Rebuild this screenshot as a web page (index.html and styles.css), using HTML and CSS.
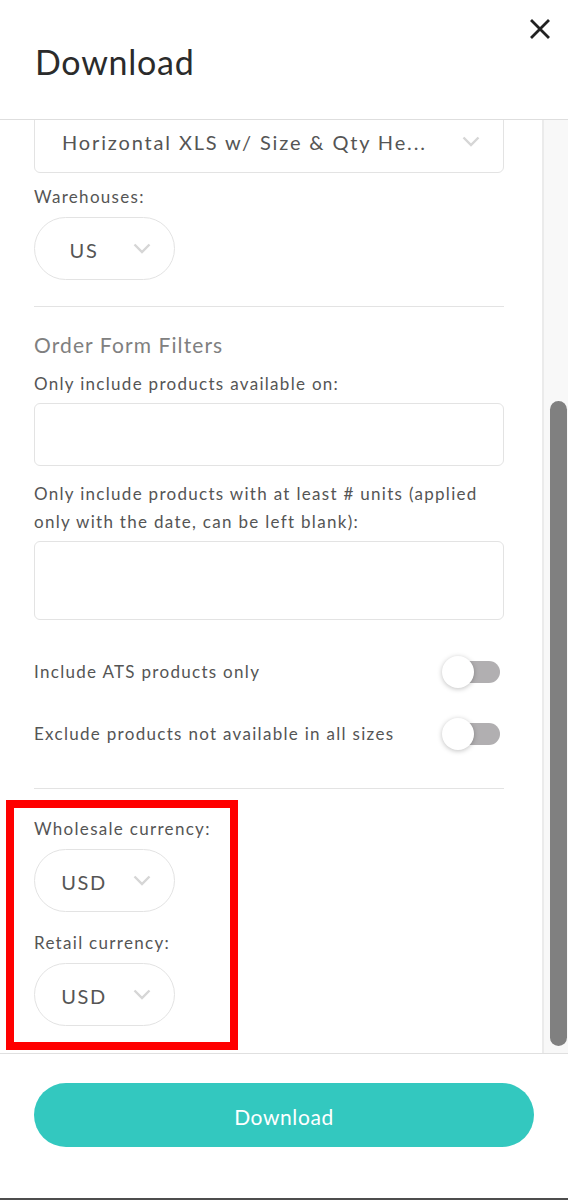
FILE: index.html
```html
<!DOCTYPE html>
<html lang="en">
<head>
<meta charset="utf-8">
<title>Download</title>
<link rel="stylesheet" href="styles.css">
</head>
<body>
<div class="modal">
  <header class="head">
    <h1 class="title">Download</h1>
    <button class="close" aria-label="Close">
      <svg width="20" height="20" viewBox="0 0 20 20"><path d="M2 2 L18 18 M18 2 L2 18" stroke="#222" stroke-width="2.8" stroke-linecap="square" fill="none"/></svg>
    </button>
  </header>
  <div class="body">
    <div class="scroll">
      <div class="select wide">
        <span class="select-text">Horizontal XLS w/ Size &amp; Qty He...</span>
        <svg class="chev" width="18" height="11" viewBox="0 0 18 11"><polyline points="1.5,1.5 9,9 16.5,1.5" fill="none" stroke="#d6d6d6" stroke-width="2.4"/></svg>
      </div>
      <div class="label lbl-wh">Warehouses:</div>
      <div class="select pill">
        <span class="pill-text">US</span>
        <svg class="chev" width="18" height="11" viewBox="0 0 18 11"><polyline points="1.5,1.5 9,9 16.5,1.5" fill="none" stroke="#d6d6d6" stroke-width="2.4"/></svg>
      </div>
      <hr class="sep sep1">
      <h2 class="section">Order Form Filters</h2>
      <div class="label lbl-avail">Only include products available on:</div>
      <div class="input"></div>
      <div class="label lbl-units">Only include products with at least # units (applied only with the date, can be left blank):</div>
      <div class="input tall"></div>
      <div class="toggle-row first">
        <span class="label">Include ATS products only</span>
        <span class="toggle"><span class="track"></span><span class="knob"></span></span>
      </div>
      <div class="toggle-row">
        <span class="label">Exclude products not available in all sizes</span>
        <span class="toggle"><span class="track"></span><span class="knob"></span></span>
      </div>
      <hr class="sep sep2">
      <div class="label lbl-ws">Wholesale currency:</div>
      <div class="select pill">
        <span class="pill-text">USD</span>
        <svg class="chev" width="18" height="11" viewBox="0 0 18 11"><polyline points="1.5,1.5 9,9 16.5,1.5" fill="none" stroke="#d6d6d6" stroke-width="2.4"/></svg>
      </div>
      <div class="label lbl-rt">Retail currency:</div>
      <div class="select pill">
        <span class="pill-text">USD</span>
        <svg class="chev" width="18" height="11" viewBox="0 0 18 11"><polyline points="1.5,1.5 9,9 16.5,1.5" fill="none" stroke="#d6d6d6" stroke-width="2.4"/></svg>
      </div>
    </div>
    <div class="scrollbar"><div class="thumb"></div></div>
  </div>
  <footer class="foot">
    <button class="primary">Download</button>
  </footer>
  <div class="highlight"></div>
</div>
</body>
</html>
```
FILE: styles.css
```css
* { box-sizing: border-box; }
html, body { margin: 0; padding: 0; background: #fff; }
body { font-family: Lato, "Open Sans", sans-serif; color: #555; }

.modal {
  position: relative;
  width: 568px;
  height: 1200px;
  display: flex;
  flex-direction: column;
  border-bottom: 2px solid #4d4d4d;
  overflow: hidden;
}

.head {
  height: 120px;
  flex: none;
  display: flex;
  justify-content: space-between;
  align-items: flex-start;
  padding: 19px 18px 0 35px;
  border-bottom: 1px solid #dedede;
}
.title {
  margin: 23px 0 0 0;
  font-size: 34px;
  line-height: 40px;
  font-weight: 400;
  letter-spacing: 0.75px;
  color: #2b2b2b;
}
.close {
  border: 0;
  background: none;
  padding: 0;
  width: 20px;
  height: 20px;
  display: block;
}
.close svg { display: block; }

.body {
  flex: none;
  height: 933px;
  display: flex;
}
.scroll {
  flex: 1;
  overflow: hidden;
  padding: 0 38px 0 34px;
}
.scrollbar {
  flex: none;
  width: 26px;
  background: #f8f8f8;
  border-left: 2px solid #ebebeb;
  padding: 281px 1px 0 6px;
}
.thumb {
  width: 17px;
  height: 645px;
  background: #808080;
  border-radius: 9px;
}

.select {
  display: flex;
  align-items: center;
  border: 1px solid #e3e3e3;
  background: #fff;
  font-size: 20px;
  color: #555;
}
.select.wide {
  margin-top: -11px;
  height: 64px;
  border-radius: 6px;
  padding: 0 23px 0 27px;
  justify-content: space-between;
}
.select-text {
  padding-top: 2px;
  letter-spacing: 1.85px;
  white-space: nowrap;
}
.select.pill {
  width: 141px;
  height: 63px;
  border-radius: 32px;
  padding: 0 23px 0 0;
}
.pill-text {
  flex: 1;
  text-align: center;
  padding: 3px 0 0 0;
  letter-spacing: 1.6px;
}
.chev { display: block; flex: none; }

.label {
  font-size: 17px;
  line-height: 28px;
  letter-spacing: 1.3px;
  color: #555;
}
.lbl-wh { margin: 10px 0 6px; }
.lbl-avail { margin: 11px 0 5px; }
.lbl-units { margin: 14px 0 5px; }
.lbl-ws { margin: 26px 0 6px; }
.lbl-rt { margin: 17px 0 6px; }

.sep {
  border: 0;
  border-top: 1px solid #e3e3e3;
  margin: 0;
}
.sep1 { margin-top: 26px; }
.sep2 { margin-top: 32px; }

.section {
  margin: 24px 0 0;
  font-size: 21px;
  line-height: 28px;
  font-weight: 400;
  letter-spacing: 1.1px;
  color: #808080;
}

.input {
  height: 63px;
  border: 1px solid #e3e3e3;
  border-radius: 6px;
}
.input.tall { height: 79px; }

.toggle-row {
  height: 44px;
  display: flex;
  align-items: center;
  justify-content: space-between;
  padding-right: 4px;
  margin-top: 18px;
}
.toggle-row.first { margin-top: 30px; }
.toggle {
  position: relative;
  width: 58px;
  height: 32px;
  flex: none;
}
.track {
  position: absolute;
  left: 8px;
  right: 0;
  top: 5px;
  height: 22px;
  border-radius: 11px;
  background: #b1afb1;
}
.knob {
  position: absolute;
  left: 0;
  top: 0;
  width: 32px;
  height: 32px;
  border-radius: 50%;
  background: #fff;
  box-shadow: 0 1px 5px rgba(0, 0, 0, 0.25);
}

.foot {
  flex: 1;
  border-top: 1px solid #e0e0e0;
  padding: 29px 34px 0;
}
.primary {
  display: block;
  width: 500px;
  height: 64px;
  border: 0;
  border-radius: 32px;
  background: #33c8bf;
  color: #fff;
  font-family: Lato, "Open Sans", sans-serif;
  font-size: 21px;
  letter-spacing: 0.6px;
  padding: 3px 0 0 0;
}

.highlight {
  position: absolute;
  left: 6px;
  top: 800px;
  width: 232px;
  height: 250px;
  border: 8px solid #ff0000;
  pointer-events: none;
}
```
